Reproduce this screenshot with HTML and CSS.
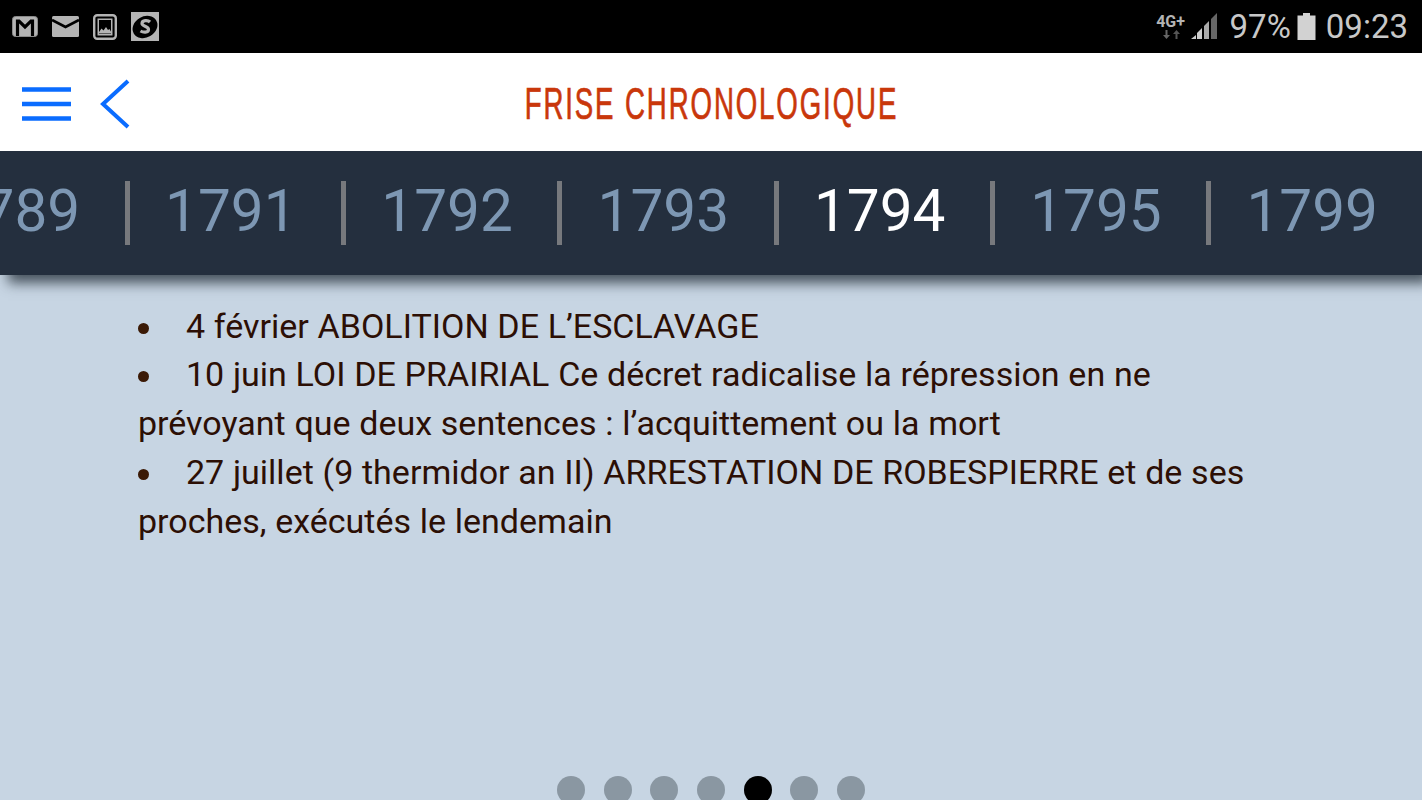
FILE: index.html
```html
<!DOCTYPE html>
<html lang="fr">
<head>
  <meta charset="UTF-8" />
  <meta name="viewport" content="width=device-width, initial-scale=1.0" />
  <title>Frise chronologique</title>
  <link rel="stylesheet" href="styles.css">
</head>
<body>

  <div class="statusbar">
    <div class="notifs">
      <svg class="ico" width="26" height="21" viewBox="0 0 26 21">
        <rect x=".5" y=".5" width="25" height="20" rx="3" fill="#b4b4b4" stroke="#8a8a8a"/>
        <path d="M5.500 20V5h1.500l6 6 6-6h1.500v15" fill="none" stroke="#000" stroke-width="3.200"/>
      </svg>
      <svg class="ico" width="27" height="21" viewBox="0 0 27 21">
        <rect width="27" height="21" rx="1.500" fill="#b4b4b4"/>
        <path d="M0 4l13.500 7L27 4" fill="none" stroke="#000" stroke-width="2.600"/>
      </svg>
      <svg class="ico" width="24" height="26" viewBox="0 0 24 26">
        <rect x="1.200" y="1.200" width="21.600" height="23.600" rx="3" fill="#000" stroke="#b4b4b4" stroke-width="2.400"/>
        <rect x="4.500" y="4.500" width="15" height="17" fill="#b4b4b4"/>
        <rect x="6" y="6" width="12" height="14" fill="#000"/>
        <path d="M5 19.500l3.500-5 2 2 2.500-3.500 2 3 1.500-1 2.500 4.500z" fill="#b4b4b4"/>
      </svg>
      <svg class="ico" width="28" height="29" viewBox="0 0 28 29">
        <rect width="28" height="29" fill="#b4b4b4"/>
        <ellipse cx="14" cy="15" rx="13" ry="10.500" transform="rotate(-30 14 15)" fill="#000"/>
        <path d="M19 10c-2-2-8-2-8 1.500 0 3 6.500 2.500 6.500 6 0 3.500-5.500 3-8 1.500" fill="none" stroke="#b4b4b4" stroke-width="3.200"/>
      </svg>
    </div>
    <div class="sysinfo">
      <div class="net">
        <span class="net-label">4G+</span>
        <svg width="18" height="9" viewBox="0 0 18 9">
          <path d="M5.500 0v5H8L4.500 9 1 5h2.500V0z" fill="#666"/>
          <path d="M13.500 9V4H11l3.500-4L18 4h-2.500v5z" fill="#555"/>
        </svg>
      </div>
      <svg class="signal" width="27" height="27" viewBox="0 0 27 27">
        <path d="M0 26l5-4v4z" fill="#ccc"/>
        <path d="M6 20l5-5v11H6z" fill="#ccc"/>
        <path d="M13 13l5-5v18h-5z" fill="#aaa"/>
        <path d="M20 6l6-6v26h-6z" fill="#666"/>
      </svg>
      <span class="pct">97%</span>
      <svg class="batt" width="19" height="27" viewBox="0 0 19 27">
        <path d="M6 0h7v2.500h5.500V27H.5V2.500H6z" fill="#d2d2d2"/>
      </svg>
      <span class="clock">09:23</span>
    </div>
  </div>

  <header class="topbar">
    <div class="topbar-btns">
      <svg width="50" height="36" viewBox="0 0 50 36">
        <path d="M0 3.500h49M0 18h49M0 32.500h49" stroke="#0a6cff" stroke-width="4.700"/>
      </svg>
      <svg width="30" height="50" viewBox="0 0 30 50">
        <path d="M28 2L3 25l25 23" fill="none" stroke="#0a6cff" stroke-width="4"/>
      </svg>
    </div>
    <h1 class="title">FRISE CHRONOLOGIQUE</h1>
  </header>

  <nav class="years">
    <div class="year">1789</div>
    <div class="year">1791</div>
    <div class="year">1792</div>
    <div class="year">1793</div>
    <div class="year active">1794</div>
    <div class="year">1795</div>
    <div class="year">1799</div>
  </nav>

  <main class="content">
    <ul class="events">
      <li>4 février ABOLITION DE L’ESCLAVAGE</li>
      <li>10 juin LOI DE PRAIRIAL Ce décret radicalise la répression en ne prévoyant que deux sentences : l’acquittement ou la mort</li>
      <li>27 juillet (9 thermidor an II) ARRESTATION DE ROBESPIERRE et de ses proches, exécutés le lendemain</li>
    </ul>
  </main>

  <div class="dots">
    <span class="dot"></span>
    <span class="dot"></span>
    <span class="dot"></span>
    <span class="dot"></span>
    <span class="dot current"></span>
    <span class="dot"></span>
    <span class="dot"></span>
  </div>

</body>
</html>
```

FILE: styles.css
```css
* { box-sizing: border-box; }
html, body { height: 800px; overflow: hidden; }
body {
  margin: 0;
  font-family: Roboto, "Liberation Sans", sans-serif;
  background-color: #c7d5e3;
  display: flex;
  flex-direction: column;
}

/* status bar */
.statusbar {
  height: 53px;
  background-color: #000;
  display: flex;
  justify-content: space-between;
  align-items: center;
  padding: 0 14px 0 12px;
  flex: none;
}
.notifs { display: flex; align-items: center; gap: 14px; }
.sysinfo { display: flex; align-items: center; color: #c8c8c8; font-size: 33px; }
.net { display: flex; flex-direction: column; align-items: center; width: 30px; margin-right: 6px; }
.net-label { font-size: 16px; font-weight: 700; line-height: 16px; color: #b4b4b4; }
.signal { margin-right: 12px; margin-left: -1px; margin-top: -1px; }
.pct { margin-right: 6px; }
.batt { margin-right: 10px; }

/* header */
.topbar {
  height: 98px;
  background-color: #fff;
  display: flex;
  align-items: center;
  justify-content: center;
  position: relative;
  flex: none;
}
.topbar-btns {
  position: absolute;
  left: 22px;
  top: 26px;
  display: flex;
  align-items: center;
  gap: 28px;
}
.title {
  margin: 0;
  font-family: "Liberation Sans", sans-serif;
  font-size: 44px;
  font-weight: 400;
  color: #c9370b;
  letter-spacing: 3px;
  -webkit-text-stroke: 0.7px #c9370b;
  white-space: nowrap;
  transform: scaleX(0.628);
  position: relative;
  top: 2px;
}

/* years strip */
.years {
  height: 124px;
  background-color: #242f3e;
  display: flex;
  align-items: center;
  flex: none;
  box-shadow: 8px 8px 12px rgba(30, 40, 50, 0.75);
  position: relative;
  overflow: hidden;
  clip-path: inset(0 0 -30px 0);
}
.year {
  flex: none;
  width: 216.3px;
  height: 64px;
  line-height: 60px;
  text-align: center;
  font-size: 58.5px;
  color: #7d97b3;
  border-left: 5px solid #77797d;
  padding-right: 9px;
}
.year:first-child { margin-left: -91.7px; border-left: none; padding-right: 4px; }
.year.active { color: #fff; }

/* text */
.content {
  flex: 1;
  padding: 26.5px 170px 0 138px;
}
.events {
  margin: 0;
  padding: 0;
  list-style: none;
  font-size: 34px;
  word-spacing: 0.3px;
  line-height: 48.8px;
  color: #2c0f05;
}
.events li::before {
  content: "";
  display: inline-block;
  width: 11px;
  height: 11px;
  border-radius: 50%;
  background-color: #3b1a06;
  margin-right: 37px;
  vertical-align: 4px;
}

/* pager */
.dots {
  position: absolute;
  left: 557px;
  top: 776px;
  display: flex;
  gap: 18.7px;
}
.dot {
  width: 28px;
  height: 28px;
  border-radius: 50%;
  background-color: #8a97a2;
}
.dot.current { background-color: #000; }
```
